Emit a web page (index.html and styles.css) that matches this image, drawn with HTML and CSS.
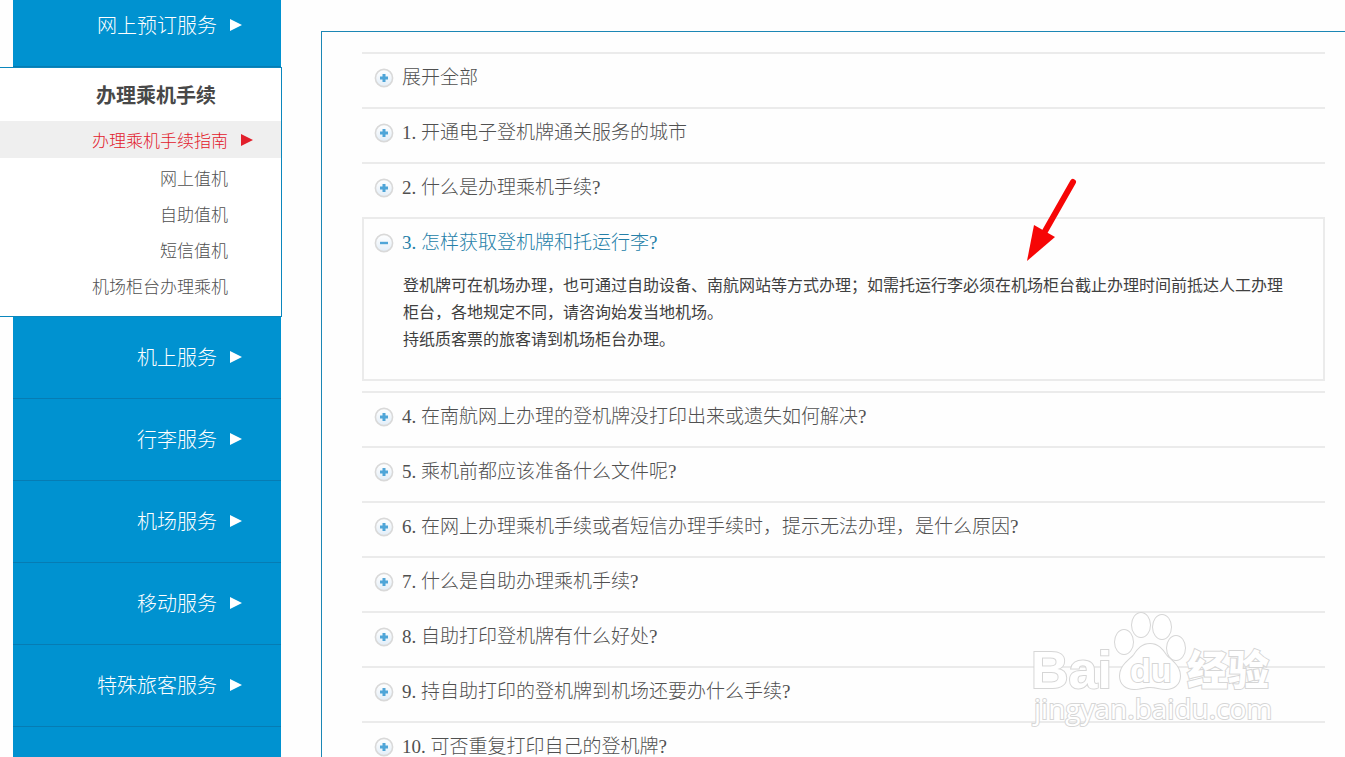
FILE: index.html
```html
<!DOCTYPE html>
<html lang="zh-CN">
<head>
<meta charset="utf-8">
<title>办理乘机手续指南</title>
<link rel="stylesheet" href="styles.css">
</head>
<body>
<svg class="defs" width="0" height="0" aria-hidden="true">
  <defs>
    <linearGradient id="disc" x1="0" y1="0" x2="0" y2="1"><stop offset="0" stop-color="#fff"/><stop offset="1" stop-color="#e3eef8"/></linearGradient>
    <symbol id="arrow" viewBox="0 0 14 14"><path d="M1 1 13 7 1 13z" fill="currentColor"/></symbol>
    <symbol id="plus" viewBox="0 0 20 20"><circle cx="10" cy="10" r="8.6" fill="url(#disc)" stroke="#d9d9d9" stroke-width="1.6"/><path d="M10 6v8M6 10h8" stroke="#4fa5d8" stroke-width="3"/></symbol>
    <symbol id="minus" viewBox="0 0 20 20"><circle cx="10" cy="10" r="8.6" fill="url(#disc)" stroke="#d9d9d9" stroke-width="1.6"/><path d="M6 10h8" stroke="#4fa5d8" stroke-width="2.4"/></symbol>
  </defs>
</svg>
<div class="page">
  <nav class="side">
    <a class="cat cat-first" href="#">网上预订服务<svg class="arrow"><use href="#arrow"/></svg></a>
    <section class="panel">
      <h2 class="panel-title">办理乘机手续</h2>
      <a class="sub sub-active" href="#">办理乘机手续指南<svg class="arrow"><use href="#arrow"/></svg></a>
      <a class="sub" href="#">网上值机</a>
      <a class="sub" href="#">自助值机</a>
      <a class="sub" href="#">短信值机</a>
      <a class="sub" href="#">机场柜台办理乘机</a>
    </section>
    <a class="cat" href="#">机上服务<svg class="arrow"><use href="#arrow"/></svg></a>
    <a class="cat" href="#">行李服务<svg class="arrow"><use href="#arrow"/></svg></a>
    <a class="cat" href="#">机场服务<svg class="arrow"><use href="#arrow"/></svg></a>
    <a class="cat" href="#">移动服务<svg class="arrow"><use href="#arrow"/></svg></a>
    <a class="cat" href="#">特殊旅客服务<svg class="arrow"><use href="#arrow"/></svg></a>
    <div class="side-rest"></div>
  </nav>
  <main class="content">
    <ul class="faq">
      <li class="item"><button class="q" type="button"><svg class="mark"><use href="#plus"/></svg>展开全部</button></li>
      <li class="item"><button class="q" type="button"><svg class="mark"><use href="#plus"/></svg>1. 开通电子登机牌通关服务的城市</button></li>
      <li class="item"><button class="q" type="button"><svg class="mark"><use href="#plus"/></svg>2. 什么是办理乘机手续?</button></li>
      <li class="item item-open">
        <button class="q" type="button" aria-expanded="true"><svg class="mark"><use href="#minus"/></svg>3. 怎样获取登机牌和托运行李?</button>
        <div class="answer">
          <p>登机牌可在机场办理，也可通过自助设备、南航网站等方式办理；如需托运行李必须在机场柜台截止办理时间前抵达人工办理柜台，各地规定不同，请咨询始发当地机场。</p>
          <p>持纸质客票的旅客请到机场柜台办理。</p>
        </div>
      </li>
      <li class="item"><button class="q" type="button"><svg class="mark"><use href="#plus"/></svg>4. 在南航网上办理的登机牌没打印出来或遗失如何解决?</button></li>
      <li class="item"><button class="q" type="button"><svg class="mark"><use href="#plus"/></svg>5. 乘机前都应该准备什么文件呢?</button></li>
      <li class="item"><button class="q" type="button"><svg class="mark"><use href="#plus"/></svg>6. 在网上办理乘机手续或者短信办理手续时，提示无法办理，是什么原因?</button></li>
      <li class="item"><button class="q" type="button"><svg class="mark"><use href="#plus"/></svg>7. 什么是自助办理乘机手续?</button></li>
      <li class="item"><button class="q" type="button"><svg class="mark"><use href="#plus"/></svg>8. 自助打印登机牌有什么好处?</button></li>
      <li class="item"><button class="q" type="button"><svg class="mark"><use href="#plus"/></svg>9. 持自助打印的登机牌到机场还要办什么手续?</button></li>
      <li class="item"><button class="q" type="button"><svg class="mark"><use href="#plus"/></svg>10. 可否重复打印自己的登机牌?</button></li>
    </ul>
  </main>
  <svg class="pointer" viewBox="0 0 50 84" aria-hidden="true">
    <path d="M46 4 17 55" stroke="#f60606" stroke-width="6" stroke-linecap="round"/>
    <path d="M0 83 7 47 28 59z" fill="#f60606"/>
  </svg>
  <svg class="watermark" viewBox="0 0 250 130" aria-hidden="true">
    <g class="wm-shape">
      <ellipse cx="94" cy="42" rx="9" ry="12"/>
      <ellipse cx="111" cy="25" rx="9" ry="12"/>
      <ellipse cx="132" cy="27" rx="9" ry="12"/>
      <ellipse cx="146" cy="48" rx="9" ry="12"/>
      <path d="M120 44c-8 0-12 5-16 11-4 5-14 10-14 21 0 8 6 13 14 13 7 0 10-2 16-2s10 2 16 2c8 0 14-5 14-13 0-11-10-16-14-21-4-6-8-11-16-11z"/>
      <text class="wm-latin" x="1" y="88">Bai</text>
      <text class="wm-du" x="100" y="82">du</text>
      <text class="wm-cjk" x="157" y="85">经验</text>
      <text class="wm-url" x="4" y="119">jingyan.baidu.com</text>
    </g>
  </svg>
</div>
</body>
</html>
```
FILE: styles.css
```css
* {
  box-sizing: border-box;
}

body {
  margin: 0;
  background: #fefefe;
  color: #505050;
  font-family: "Noto Sans CJK SC", sans-serif;
}

.defs {
  position: absolute;
}

.page {
  position: relative;
  display: grid;
  grid-template-columns: 282px 1fr;
  column-gap: 39px;
  height: 100vh;
  overflow: hidden;
}

.side {
  display: flex;
  flex-direction: column;
}

.cat {
  display: flex;
  flex: none;
  align-items: center;
  justify-content: flex-end;
  gap: 12px;
  height: 82px;
  margin: 0 1px 0 13px;
  padding: 0 38px 2px 0;
  border-bottom: 1px solid #067cb3;
  background: #0092d0;
  color: #fff;
  font-size: 20px;
  font-weight: 300;
  line-height: 30px;
  text-decoration: none;
}

.cat-first {
  margin-top: -15px;
}

.arrow {
  flex: none;
  width: 14px;
  height: 14px;
}

.panel {
  flex: none;
  padding-bottom: 13px;
  border: solid #0b87bd;
  border-width: 1px 1px 1px 0;
  background: #fff;
}

.panel-title {
  margin: 0;
  padding: 12px 65px 11px 0;
  color: #484848;
  font-size: 20px;
  font-weight: 700;
  line-height: 30px;
  text-align: right;
}

.sub {
  display: flex;
  align-items: center;
  justify-content: flex-end;
  gap: 12px;
  height: 36px;
  padding-right: 53px;
  color: #505050;
  font-size: 17px;
  font-weight: 300;
  text-decoration: none;
}

.sub-active {
  height: 37px;
  margin-bottom: 1px;
  padding-right: 27px;
  background: #efefef;
  color: #e2202c;
}

.side-rest {
  flex: 1;
  margin: 0 1px 0 13px;
  background: #0092d0;
}

.content {
  margin-top: 31px;
  padding: 20px 20px 0 40px;
  border: solid #1c87b5;
  border-width: 1px 0 0 1px;
}

.faq {
  margin: 0;
  padding: 0;
  list-style: none;
}

.item {
  height: 55px;
  border-top: 2px solid #ebebeb;
}

.q {
  display: flex;
  align-items: center;
  gap: 8px;
  width: 100%;
  height: 47px;
  padding: 0 0 0 12px;
  border: 0;
  background: none;
  color: #505050;
  font-family: "Liberation Serif", "Noto Sans CJK SC", serif;
  font-size: 19px;
  font-weight: 300;
  line-height: 28px;
  text-align: left;
}

.mark {
  flex: none;
  width: 20px;
  height: 20px;
}

.item-open {
  height: auto;
  margin-bottom: 10px;
  padding-bottom: 27px;
  border: 2px solid #ebebeb;
}

.item-open .q {
  padding-left: 10px;
  color: #257fa8;
}

.answer {
  padding: 5px 34px 0 39px;
  color: #404040;
  font-size: 16px;
  line-height: 27px;
}

.answer p {
  margin: 0;
}

.pointer {
  position: absolute;
  top: 178px;
  right: 268px;
  width: 50px;
  height: 84px;
}

.watermark {
  position: absolute;
  top: 600px;
  right: 65px;
  width: 250px;
  height: 130px;
}

.wm-shape {
  fill: #fff;
  stroke: #d6d6d6;
  stroke-width: 2px;
  paint-order: stroke;
}

.wm-latin {
  font: 700 52px "Liberation Sans", sans-serif;
}

.wm-du {
  font: 700 34px "Liberation Sans", sans-serif;
}

.wm-cjk {
  font: 900 41px "Noto Sans CJK SC", sans-serif;
}

.wm-url {
  font: 400 28px "Open Sans", sans-serif;
}
```
